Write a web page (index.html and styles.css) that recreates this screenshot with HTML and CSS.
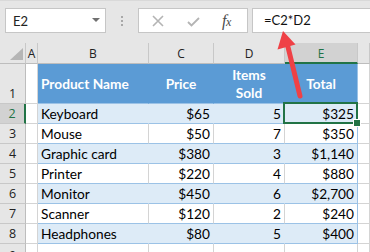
FILE: index.html
```html
<!DOCTYPE html>
<html>
<head>
<meta charset="utf-8">
<link rel="stylesheet" href="styles.css">
</head>
<body>
<div class="toolbar">
  <div class="namebox"><span class="nb-text">E2</span><span class="caret"></span></div>
  <div class="dots"><i></i><i></i><i></i></div>
  <div class="fnbox">
    <svg class="ic-x" width="12" height="12" viewBox="0 0 12 12"><path d="M1 1L11 11M11 1L1 11" stroke="#b4b4b4" stroke-width="1.6" fill="none"/></svg>
    <svg class="ic-check" width="13" height="10" viewBox="0 0 13 10"><path d="M1 5L4.5 8.5L12 1" stroke="#b4b4b4" stroke-width="1.8" fill="none"/></svg>
    <span class="fx">f<span class="fx-x">x</span></span>
  </div>
  <div class="formula">=C2*D2</div>
</div>

<div class="sheet">
  <div class="ch corner"><svg width="26" height="21" viewBox="0 0 26 21"><polygon points="23,5 23,17 10,17" fill="#b5b5b5"/></svg></div>
  <div class="ch">A</div>
  <div class="ch">B</div>
  <div class="ch">C</div>
  <div class="ch">D</div>
  <div class="ch sel">E</div>
  <div class="ch"></div>

  <div class="rh rh1">1</div>
  <div class="c"></div>
  <div class="c th left">Product Name</div>
  <div class="c th">Price</div>
  <div class="c th">Items<br>Sold</div>
  <div class="c th last">Total</div>
  <div class="c"></div>

  <div class="rh sel">2</div>
  <div class="c"></div>
  <div class="c band">Keyboard</div>
  <div class="c band num">$65</div>
  <div class="c band num">5</div>
  <div class="c band num last active">$325</div>
  <div class="c"></div>

  <div class="rh">3</div>
  <div class="c"></div>
  <div class="c plain">Mouse</div>
  <div class="c plain num">$50</div>
  <div class="c plain num">7</div>
  <div class="c plain num last">$350</div>
  <div class="c"></div>

  <div class="rh">4</div>
  <div class="c"></div>
  <div class="c band">Graphic card</div>
  <div class="c band num">$380</div>
  <div class="c band num">3</div>
  <div class="c band num last">$1,140</div>
  <div class="c"></div>

  <div class="rh">5</div>
  <div class="c"></div>
  <div class="c plain">Printer</div>
  <div class="c plain num">$220</div>
  <div class="c plain num">4</div>
  <div class="c plain num last">$880</div>
  <div class="c"></div>

  <div class="rh">6</div>
  <div class="c"></div>
  <div class="c band">Monitor</div>
  <div class="c band num">$450</div>
  <div class="c band num">6</div>
  <div class="c band num last">$2,700</div>
  <div class="c"></div>

  <div class="rh">7</div>
  <div class="c"></div>
  <div class="c plain">Scanner</div>
  <div class="c plain num">$120</div>
  <div class="c plain num">2</div>
  <div class="c plain num last">$240</div>
  <div class="c"></div>

  <div class="rh">8</div>
  <div class="c"></div>
  <div class="c band">Headphones</div>
  <div class="c band num">$80</div>
  <div class="c band num">5</div>
  <div class="c band num last">$400</div>
  <div class="c"></div>

  <div class="rh rh9">9</div>
  <div class="c"></div>
  <div class="c"></div>
  <div class="c"></div>
  <div class="c"></div>
  <div class="c"></div>
  <div class="c"></div>
</div>

<svg class="arrow" width="370" height="252" viewBox="0 0 370 252">
  <line x1="287.5" y1="45" x2="300" y2="96" stroke="#ef4146" stroke-width="5" stroke-linecap="round"/>
  <polygon points="283,31 277.5,49.5 295.5,44.5" fill="#ef4146"/>
</svg>
</body>
</html>
```

FILE: styles.css
```css
* { box-sizing: border-box; }
html, body { margin: 0; padding: 0; }
body {
  width: 370px;
  height: 252px;
  overflow: hidden;
  background: #ffffff;
  position: relative;
  font-family: Lato, "Liberation Sans", sans-serif;
}

.toolbar {
  height: 43px;
  background: #e6e6e6;
  border-top: 1px solid #d9d9d9;
  display: flex;
  align-items: flex-start;
  padding-top: 7px;
}
.namebox {
  margin-left: 5px;
  width: 101px;
  height: 25px;
  background: #fff;
  border: 1px solid #c6c6c6;
  display: flex;
  align-items: center;
  justify-content: space-between;
  padding: 0 5px 0 7px;
}
.nb-text { font-size: 13px; color: #222; }
.caret {
  width: 0; height: 0;
  border-left: 4px solid transparent;
  border-right: 4px solid transparent;
  border-top: 4px solid #707070;
  margin-top: -2px;
}
.dots {
  margin-left: 15px;
  width: 3px;
  height: 25px;
  display: flex;
  flex-direction: column;
  justify-content: center;
  gap: 2px;
}
.dots i { display: block; width: 2px; height: 2px; background: #a8a8a8; }
.fnbox {
  margin-left: 14px;
  width: 110px;
  height: 25px;
  background: #fff;
  border: 1px solid #c6c6c6;
  display: flex;
  align-items: center;
  padding-left: 13px;
}
.ic-x { margin-top: 1px; }
.ic-check { margin-left: 23px; margin-top: 2px; }
.fx {
  margin-left: 22px;
  font-family: "Liberation Serif", serif;
  font-style: italic;
  font-size: 16px;
  color: #4a4a4a;
  letter-spacing: -0.5px;
}
.fx-x { font-size: 12px; }
.formula {
  margin-left: 4px;
  flex: 1;
  height: 25px;
  background: #fff;
  border: 1px solid #c6c6c6;
  border-right: none;
  padding-left: 11px;
  font-size: 13px;
  line-height: 23px;
  color: #111;
}

.sheet {
  display: grid;
  grid-template-columns: 26px 12px 111px 65px 71px 73px 1fr;
  grid-template-rows: 21px 40px repeat(7, 20px) 20px;
}
.ch {
  background: #e6e6e6;
  border-right: 1px solid #c8c8c8;
  border-bottom: 1px solid #bdbdbd;
  font-family: "Open Sans", sans-serif;
  font-size: 12px;
  color: #222;
  display: flex;
  align-items: center;
  justify-content: center;
  padding-top: 1px;
}
.ch.corner { padding: 0; display: block; }
.ch.corner svg { display: block; }
.ch.sel {
  background: #d2d2d2;
  color: #217346;
  border-bottom: 2px solid #217346;
}
.rh {
  background: #e6e6e6;
  border-right: 1px solid #bdbdbd;
  border-bottom: 1px solid #c8c8c8;
  font-family: "Open Sans", sans-serif;
  font-size: 12.5px;
  color: #222;
  display: flex;
  align-items: center;
  justify-content: center;
}
.rh1 { align-items: flex-end; padding-bottom: 1px; }
.rh9 { align-items: flex-start; padding-top: 3px; }
.rh.sel {
  background: #d2d2d2;
  color: #217346;
  border-right: 2px solid #217346;
}

.c {
  border-right: 1px solid #d4d4d4;
  border-bottom: 1px solid #d4d4d4;
  font-size: 13.7px;
  color: #000;
  padding: 0 3px;
  line-height: 19px;
  white-space: nowrap;
  position: relative;
}
.th {
  background: #5b9bd5;
  border-right-color: #5b9bd5;
  border-bottom-color: #9bc2e6;
  color: #fff;
  font-weight: bold;
  display: flex;
  align-items: center;
  justify-content: center;
  text-align: center;
  line-height: 18px;
}
.th.left { justify-content: flex-start; }
.band {
  background: #ddebf7;
  border-right-color: #ddebf7;
  border-bottom-color: #9bc2e6;
}
.plain { border-bottom-color: #9bc2e6; }
.last { border-right-color: #9bc2e6; }
.num { text-align: right; }
.active::after {
  content: "";
  position: absolute;
  top: -2px; left: -2px; right: -1px; bottom: -1px;
  border: 2px solid #217346;
}
.active::before {
  content: "";
  position: absolute;
  right: -4px; bottom: -4px;
  width: 6px; height: 6px;
  background: #217346;
  border: 1px solid #fff;
  z-index: 2;
}

.arrow {
  position: absolute;
  top: 0; left: 0;
  pointer-events: none;
}
```
